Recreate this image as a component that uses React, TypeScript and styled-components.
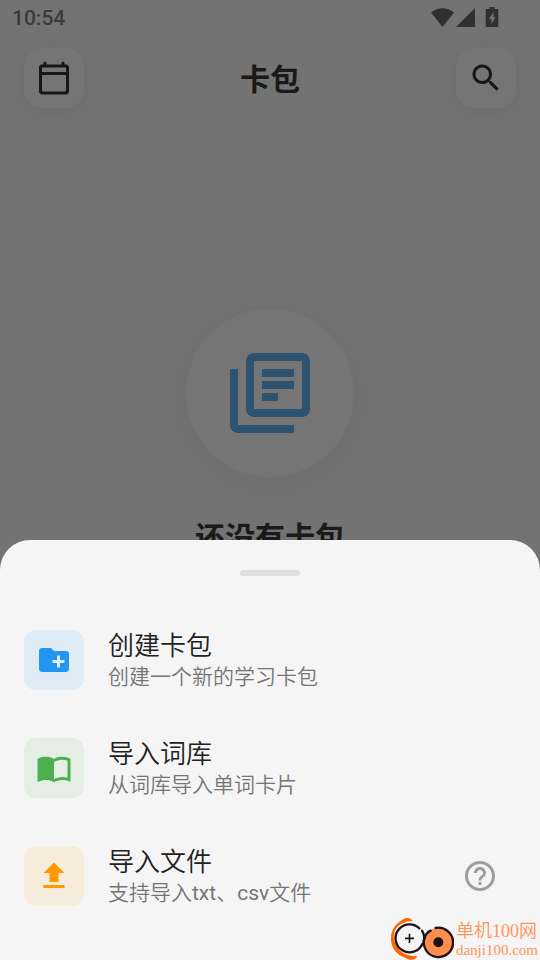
import React from "react";
import styled, { createGlobalStyle } from "styled-components";

const GlobalStyle = createGlobalStyle`
  * { box-sizing: border-box; }
  body {
    margin: 0;
    background: #f5f5f5;
    font-family: Roboto, "Noto Sans CJK SC", sans-serif;
  }
  button { font: inherit; color: inherit; border: 0; padding: 0; cursor: pointer; }
  h1, h2, p { margin: 0; }
  svg { display: block; }
`;

const Page = styled.div`
  position: relative;
  display: flex;
  flex-direction: column;
  min-height: 100vh;
  overflow: hidden;
  background: #fafafa;
`;

const StatusBar = styled.div`
  display: flex;
  align-items: center;
  justify-content: space-between;
  height: 36px;
  padding: 0 41px 0 12px;
  color: #808080;
  font-size: 21px;
  font-weight: 500;
  line-height: 38px;
`;

const StatusIcons = styled.div`
  display: flex;
  align-items: center;
  color: #666;
`;

const TopBar = styled.header`
  display: flex;
  align-items: center;
  justify-content: space-between;
  padding: 12px 24px;
`;

const IconButton = styled.button`
  display: grid;
  place-items: center;
  width: 60px;
  height: 60px;
  border-radius: 18px;
  background: #fff;
  color: #333;
  box-shadow: 0 3px 15px rgba(0, 0, 0, 0.05);
`;

const PageTitle = styled.h1`
  padding-top: 4px;
  color: #3a3a3a;
  font-size: 30px;
  line-height: 36px;
  font-weight: 700;
`;

const EmptyState = styled.main`
  display: flex;
  flex-direction: column;
  align-items: center;
  gap: 36px;
  padding-top: 189px;
`;

const EmptyBadge = styled.div`
  display: grid;
  place-items: center;
  width: 168px;
  height: 168px;
  border-radius: 50%;
  background: #fff;
  color: #63b5f7;
  box-shadow: 0 6px 30px rgba(0, 0, 0, 0.05);
`;

const EmptyTitle = styled.h2`
  color: #3a3a3a;
  font-size: 30px;
  line-height: 50px;
  font-weight: 700;
`;

const Scrim = styled.div`
  position: absolute;
  inset: 0;
  background: rgba(0, 0, 0, 0.54);
`;

const Sheet = styled.section`
  position: absolute;
  inset: auto 0 0;
  padding: 30px 0;
  border-radius: 30px 30px 0 0;
  background: #f5f5f5;
`;

const Handle = styled.div`
  width: 60px;
  height: 6px;
  margin: 0 auto 30px;
  border-radius: 3px;
  background: #e0e0e0;
`;

const Row = styled.div`
  display: flex;
  align-items: center;
  padding-right: 42px;
`;

const Action = styled.button`
  display: flex;
  flex: 1;
  align-items: center;
  gap: 24px;
  height: 108px;
  padding: 0 24px;
  background: none;
  text-align: left;
`;

const Tile = styled.span<{ $color: string; $tint: string }>`
  display: grid;
  place-items: center;
  flex: none;
  width: 60px;
  height: 60px;
  border-radius: 12px;
  background: ${(p) => p.$tint};
  color: ${(p) => p.$color};
`;

const Labels = styled.span`
  display: flex;
  flex-direction: column;
`;

const Label = styled.span`
  color: #212121;
  font-size: 26px;
  font-weight: 350;
  line-height: 34px;
`;

const Hint = styled.span`
  color: #757575;
  font-size: 21px;
  font-weight: 350;
  line-height: 28px;
`;

const Latin = styled.span`
  font-weight: 400;
`;

const HelpButton = styled.button`
  background: none;
  color: #9e9e9e;
`;

const Watermark = styled.div`
  position: absolute;
  right: 2px;
  bottom: 0;
  display: flex;
  align-items: center;
  gap: 2px;
  color: #ff9459;
  font-family: "Liberation Serif", "Noto Sans CJK SC", serif;
  white-space: nowrap;
`;

const SiteText = styled.div`
  display: flex;
  flex-direction: column;
  padding-bottom: 2px;
`;

const SiteName = styled.span`
  font-size: 18px;
  font-weight: 350;
  line-height: 24px;
`;

const SiteUrl = styled.span`
  font-size: 15px;
  line-height: 14px;
`;

function Icon({ d, size = 36 }: { d: string; size?: number }) {
  return (
    <svg width={size} height={size} viewBox="0 0 24 24" fill="currentColor" aria-hidden="true">
      <path fillRule="evenodd" d={d} />
    </svg>
  );
}

const paths = {
  calendar:
    "M20 3h-1V2a1 1 0 0 0-2 0v1H7V2a1 1 0 0 0-2 0v1H4c-1.1 0-2 .9-2 2v16c0 1.1.9 2 2 2h16c1.1 0 2-.9 2-2V5c0-1.1-.9-2-2-2zm-1 18H5c-.55 0-1-.45-1-1V10h16v10c0 .55-.45 1-1 1zm1-13H4V5h16v3z",
  search:
    "M15.5 14h-.79l-.28-.27C15.41 12.59 16 11.11 16 9.5 16 5.91 13.09 3 9.5 3S3 5.91 3 9.5 5.91 16 9.5 16c1.61 0 3.09-.59 4.23-1.57l.27.28v.79l5 4.99L20.49 19l-4.99-5zm-6 0C7.01 14 5 11.99 5 9.5S7.01 5 9.5 5 14 7.01 14 9.5 11.99 14 9.5 14z",
  library:
    "M4 6H2v14c0 1.1.9 2 2 2h14v-2H4V6zm16-4H8c-1.1 0-2 .9-2 2v12c0 1.1.9 2 2 2h12c1.1 0 2-.9 2-2V4c0-1.1-.9-2-2-2zm0 14H8V4h12v12zM10 9h8v2h-8zm0 3h4v2h-4zm0-6h8v2h-8z",
  folder:
    "M20 6h-8l-2-2H4c-1.11 0-1.99.89-1.99 2L2 18c0 1.11.89 2 2 2h16c1.11 0 2-.89 2-2V8c0-1.11-.89-2-2-2zm-1 8h-3v3h-2v-3h-3v-2h3V9h2v3h3v2z",
  book:
    "M21 5c-1.11-.35-2.33-.5-3.5-.5-1.95 0-4.05.4-5.5 1.5-1.45-1.1-3.55-1.5-5.5-1.5S2.45 4.9 1 6v14.65c0 .25.25.5.5.5.1 0 .15-.05.25-.05C3.1 20.45 5.05 20 6.5 20c1.95 0 4.05.4 5.5 1.5 1.35-.85 3.8-1.5 5.5-1.5 1.65 0 3.35.3 4.75 1.05.1.05.15.05.25.05.25 0 .5-.25.5-.5V6c-.6-.45-1.25-.75-2-1zm0 13.5c-1.1-.35-2.3-.5-3.5-.5-1.7 0-4.15.65-5.5 1.5V8c1.35-.85 3.8-1.5 5.5-1.5 1.2 0 2.4.15 3.5.5v11.5z",
  upload: "M9 16h6v-6h4l-7-7-7 7h4v6zm-4 2h14v2H5v-2z",
  help:
    "M11 18h2v-2h-2v2zm1-16C6.48 2 2 6.48 2 12s4.48 10 10 10 10-4.48 10-10S17.52 2 12 2zm0 18c-4.41 0-8-3.59-8-8s3.59-8 8-8 8 3.59 8 8-3.59 8-8 8zm0-14c-2.21 0-4 1.79-4 4h2c0-1.1.9-2 2-2s2 .9 2 2c0 2-3 1.75-3 5h2c0-2.25 3-2.5 3-5 0-2.21-1.79-4-4-4z",
};

const actions = [
  { title: "创建卡包", hint: "创建一个新的学习卡包", icon: paths.folder, color: "#2196f3", tint: "#e0ecf5" },
  { title: "导入词库", hint: "从词库导入单词卡片", icon: paths.book, color: "#4caf50", tint: "#e4eee4" },
  {
    title: "导入文件",
    hint: (
      <>
        支持导入<Latin>txt</Latin>、<Latin>csv</Latin>文件
      </>
    ),
    icon: paths.upload,
    color: "#ff9800",
    tint: "#f6ecdc",
    help: true,
  },
];

function StatusGlyphs() {
  return (
    <svg width="68" height="22" viewBox="0 0 68 22" fill="currentColor" aria-hidden="true">
      <path d="M0 5.600C6.500-.3 16.500-.3 23 5.600L11.500 20Z" />
      <path d="M44 1v19H25Z" />
      <path
        fillRule="evenodd"
        d="M58.500 0h5v2h3q.8 0 .8.8v16.400q0 .8-.8.8h-11q-.8 0-.8-.8V2.800q0-.8.8-.8h3ZM62.500 5l-4.500 7h2.500V17l4-7H62.500Z"
      />
    </svg>
  );
}

function SiteLogo() {
  return (
    <svg width="64" height="42" viewBox="0 0 192 126" fill="none" aria-hidden="true">
      <path
        d="M68 10C62-2 50-3 40 4C10 20-4 50 6 82C14 104 30 114 46 119C60 129 78 127 82 115C52 116 28 104 16 79C4 50 16 22 42 14Q54 9 68 10Z"
        fill="#f60"
      />
      <circle cx="145" cy="73" r="43" fill="#ff8d4e" />
      <g stroke="#1c1517" strokeWidth="7" strokeLinecap="round">
        <path d="M88 31A42 42 0 1 0 97 78" />
        <path d="M96 38Q106 54 101 72" />
        <path d="M122 38Q108 44 104 60" />
        <path d="M137 30A44 44 0 1 1 104 58" />
      </g>
      <circle cx="145" cy="73" r="15" fill="#1c1517" />
      <path d="M45 61H72M58.500 47V75" stroke="#1c1517" strokeWidth="5" />
    </svg>
  );
}

export default function App() {
  return (
    <Page>
      <GlobalStyle />
      <StatusBar>
        <span>10:54</span>
        <StatusIcons>
          <StatusGlyphs />
        </StatusIcons>
      </StatusBar>
      <TopBar>
        <IconButton aria-label="日历">
          <Icon d={paths.calendar} />
        </IconButton>
        <PageTitle>卡包</PageTitle>
        <IconButton aria-label="搜索">
          <Icon d={paths.search} />
        </IconButton>
      </TopBar>
      <EmptyState>
        <EmptyBadge>
          <Icon d={paths.library} size={96} />
        </EmptyBadge>
        <EmptyTitle>还没有卡包</EmptyTitle>
      </EmptyState>
      <Scrim />
      <Sheet role="dialog" aria-label="添加卡包">
        <Handle />
        {actions.map((a) => (
          <Row key={a.title}>
            <Action>
              <Tile $color={a.color} $tint={a.tint}>
                <Icon d={a.icon} />
              </Tile>
              <Labels>
                <Label>{a.title}</Label>
                <Hint>{a.hint}</Hint>
              </Labels>
            </Action>
            {a.help && (
              <HelpButton aria-label="帮助">
                <Icon d={paths.help} />
              </HelpButton>
            )}
          </Row>
        ))}
      </Sheet>
      <Watermark>
        <SiteLogo />
        <SiteText>
          <SiteName>单机100网</SiteName>
          <SiteUrl>danji100.com</SiteUrl>
        </SiteText>
      </Watermark>
    </Page>
  );
}
